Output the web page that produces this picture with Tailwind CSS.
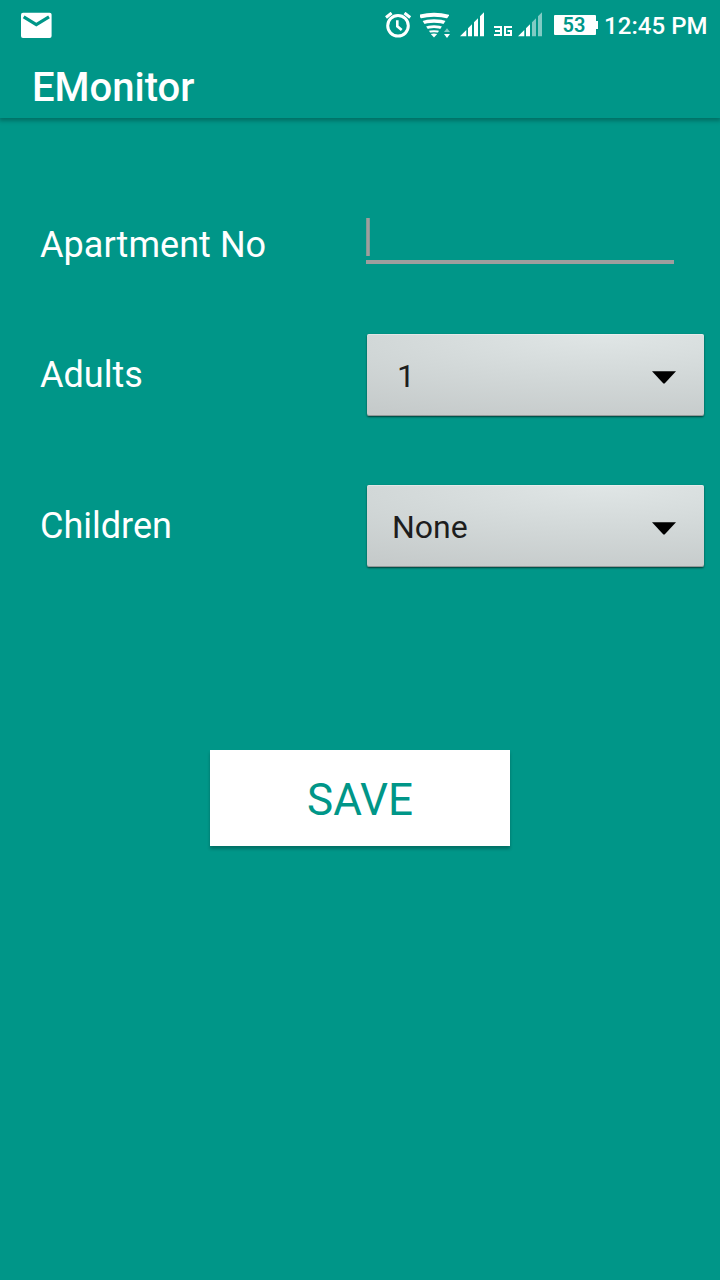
<!DOCTYPE html>
<html lang="en">
<head>
<meta charset="utf-8">
<title>EMonitor</title>
<script src="https://cdn.jsdelivr.net/npm/@tailwindcss/browser@4"></script>
</head>
<body class="w-[720px] h-[1280px] overflow-hidden bg-[#009688] font-['Roboto',sans-serif] text-white">
<header class="h-[118px] shadow-[0_2px_4px_1px_rgba(0,0,0,0.25)]">
  <div class="flex h-[50px] items-start">
    <svg class="ml-5 mt-3 h-7 w-8 shrink-0" viewBox="0 0 32 28" fill="none">
      <rect x="1" y=".7" width="30.6" height="25.3" rx="2" fill="#fff"/>
      <path d="M3.7 4.8 16.3 12.7 29 4.8" stroke="#009688" stroke-width="3.2"/>
    </svg>
    <svg class="ml-[332px] mt-3 h-[27px] w-7 shrink-0" viewBox="384 12 28 27" fill="none" stroke="#fff">
      <circle cx="398" cy="25.8" r="10.3" stroke-width="3"/>
      <path d="M386 17.5 391.6 13M404.5 13 410.2 17.5" stroke-width="3"/>
      <path d="M397.3 20.3V26.3L401.7 30" stroke-width="2.6"/>
    </svg>
    <svg class="ml-2 mt-3 h-[27px] w-[31px] shrink-0" viewBox="420 12 31 27" fill="none" stroke="#fff">
      <clipPath id="wedge"><path d="M434 38.5 419 15.5V8H449V15.5Z"/></clipPath>
      <g clip-path="url(#wedge)">
        <path d="M418 17.1Q434 12.3 450 17.1" stroke-width="3.9"/>
        <path d="M420 23.4Q434 18.6 448 23.4" stroke-width="3.3"/>
        <path d="M424 28.6Q434 24.8 444 28.6" stroke-width="2.8"/>
        <path d="M427 32.6Q434 29.9 441 32.6" stroke-width="2.2"/>
      </g>
      <path d="M430.8 34.1Q434 32.9 437.2 34.1L434 37.6Z" fill="#fff" stroke="none"/>
      <path d="M444 32 447 28.3 450 32Z" fill="#fff" fill-opacity=".5" stroke="none"/>
      <path d="M444 34H450L447 38Z" fill="#fff" stroke="none"/>
    </svg>
    <svg class="ml-[9px] mt-3 h-[25px] w-6 shrink-0" viewBox="460 12 24 25" fill="#fff">
      <path d="M460 36.3 466.3 30V36.3ZM468 28.3 472 24.3V36.3H468ZM474 22.3 478 18.3V36.3H474ZM480 16.3 484 12.3V36.3H480Z"/>
    </svg>
    <svg class="ml-[10px] mt-[26px] h-[10px] w-[18px] shrink-0" viewBox="0 0 18 10" fill="none" stroke="#fff" stroke-width="2" role="img" aria-label="3G">
      <path d="M0 1H7V9H0M1 5H7M18 1H11V9H17V5H13.5"/>
    </svg>
    <svg class="ml-1.5 mt-3 h-[25px] w-6 shrink-0" viewBox="518 12 24 25" fill="#fff">
      <path d="M518 36.3 524.3 30V36.3ZM526 28.3 530 24.3V36.3H526Z"/>
      <path fill-opacity=".5" d="M532 22.3 536 18.3V36.3H532ZM538 16.3 542 12.3V36.3H538Z"/>
    </svg>
    <div class="ml-3 mt-[15px] flex h-5 shrink-0 items-center">
      <div class="flex h-5 w-[42px] items-center justify-center rounded-[1px] bg-white pr-0.5 text-[20px] leading-5 font-semibold text-[#009688]">53</div>
      <div class="h-2 w-0.5 bg-white"></div>
    </div>
    <div class="ml-1.5 mt-3 text-[24px] leading-7 font-medium tracking-[0.05px] whitespace-nowrap">12:45 PM</div>
  </div>
  <h1 class="pl-8 pt-3.5 text-[40px] leading-[48px] font-medium">EMonitor</h1>
</header>

<main>
  <div class="flex h-[48px] mt-[98px]">
    <label class="ml-10 mt-2 w-[326px] text-[36px] leading-[42px] tracking-[0.05px]">Apartment No</label>
    <div class="mt-0.5 flex h-[46px] w-[308px] flex-col justify-between border-b-4 border-[#9e9e9e]">
      <div class="h-[38px] w-1 border-x border-[#7f9c96] bg-[#9e9e9e]"></div>
    </div>
  </div>

  <div class="mt-[70px] flex h-[82px]">
    <label class="ml-10 mt-5 w-[327px] text-[36px] leading-[42px]">Adults</label>
    <div class="flex h-[82px] w-[337px] items-center justify-between rounded-[2px] bg-[radial-gradient(ellipse_135%_110%_at_70%_0%,#e0e6e6_0%,#d2d8d8_50%,#c5caca_100%)] pl-[30px] pr-7 text-[32px] leading-9 text-[#1d1d1d] shadow-[0_1px_2px_rgba(0,0,0,0.6),inset_0_1px_0_rgba(255,255,255,0.35),inset_0_-1px_0_rgba(0,0,0,0.25)]">
      <span class="pt-0.5">1</span>
      <svg class="mt-1 h-[13px] w-6" viewBox="0 0 24 13"><path d="M0 .3H24L12.6 12.5H11.4Z" fill="#000"/></svg>
    </div>
  </div>

  <div class="mt-[69px] flex h-[82px]">
    <label class="ml-10 mt-5 w-[327px] text-[36px] leading-[42px]">Children</label>
    <div class="flex h-[82px] w-[337px] items-center justify-between rounded-[2px] bg-[radial-gradient(ellipse_135%_110%_at_70%_0%,#e0e6e6_0%,#d2d8d8_50%,#c5caca_100%)] pl-[25px] pr-7 text-[32px] leading-9 text-[#1d1d1d] shadow-[0_1px_2px_rgba(0,0,0,0.6),inset_0_1px_0_rgba(255,255,255,0.35),inset_0_-1px_0_rgba(0,0,0,0.25)]">
      <span class="pt-0.5">None</span>
      <svg class="mt-1 h-[13px] w-6" viewBox="0 0 24 13"><path d="M0 .3H24L12.6 12.5H11.4Z" fill="#000"/></svg>
    </div>
  </div>

  <button class="mx-auto mt-[183px] flex h-24 w-[300px] items-center justify-center bg-white pt-1 text-[44px] leading-[52px] text-[#009688] shadow-[0_3px_3px_rgba(0,0,0,0.25)]">SAVE</button>
</main>
</body>
</html>
